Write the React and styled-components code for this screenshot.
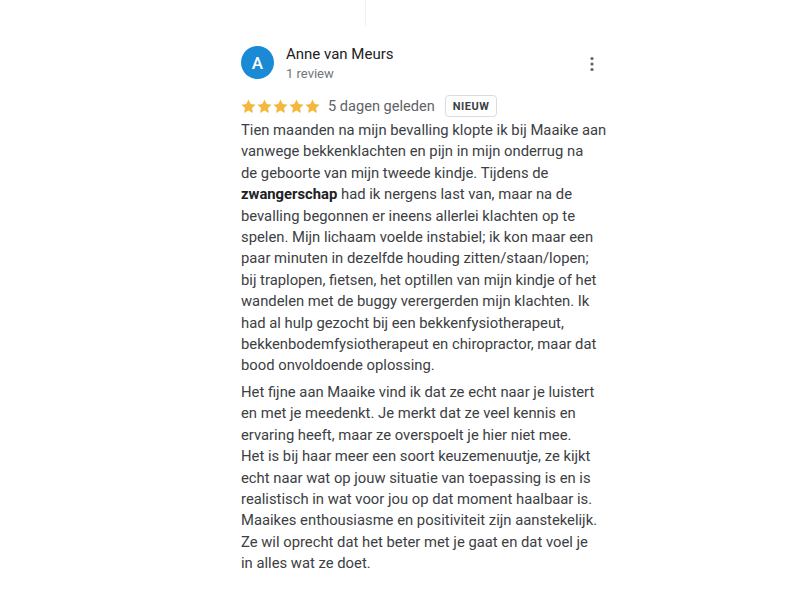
import React from "react";
import styled, { createGlobalStyle } from "styled-components";

const GlobalStyle = createGlobalStyle`
  html, body {
    margin: 0;
    padding: 0;
    background: #ffffff;
  }
  body {
    font-family: Roboto, "Noto Sans", Arial, sans-serif;
    -webkit-font-smoothing: antialiased;
  }
`;

const Page = styled.div`
  position: relative;
  width: 800px;
  height: 600px;
  display: flex;
  justify-content: flex-start;
  padding: 42px 0 0 241px;
  box-sizing: border-box;
`;

const Divider = styled.div`
  position: absolute;
  left: 365px;
  top: 0;
  width: 1px;
  height: 26px;
  background: #f1f1f1;
`;

const Review = styled.div`
  width: 363px;
  display: flex;
  flex-direction: column;
`;

const Header = styled.div`
  display: flex;
  align-items: center;
  gap: 12px;
`;

const Avatar = styled.div`
  width: 33px;
  height: 33px;
  border-radius: 50%;
  background: #1a8ad6;
  color: #fff;
  display: flex;
  align-items: center;
  justify-content: center;
  font-size: 17px;
  font-weight: 500;
`;

const Who = styled.div`
  flex: 1;
  display: flex;
  flex-direction: column;
  gap: 1px;
`;

const Name = styled.div`
  font-size: 15px;
  color: #202124;
  line-height: 20px;
  margin-top: 2px;
`;

const Count = styled.div`
  font-size: 13px;
  color: #70757a;
  line-height: 18px;
`;

const More = styled.div`
  width: 16px;
  display: flex;
  justify-content: center;
  margin-right: 4px;
  margin-top: 2px;
`;

const Meta = styled.div`
  display: flex;
  align-items: center;
  margin-top: 12px;
  height: 22px;
`;

const Stars = styled.div`
  display: flex;
  gap: 1px;
  margin-right: 8px;
`;

const Ago = styled.span`
  font-size: 14.6px;
  color: #5f6368;
  margin-right: 10px;
`;

const Badge = styled.span`
  border: 1px solid #dadce0;
  border-radius: 4px;
  padding: 0 7px;
  height: 20px;
  display: inline-flex;
  align-items: center;
  font-size: 11px;
  font-weight: 700;
  letter-spacing: 0.5px;
  color: #3c4043;
`;

const Body = styled.div`
  margin-top: 3px;
  font-size: 14.8px;
  line-height: 21.4px;
  color: #3c4043;
  white-space: nowrap;

  p {
    margin: 0 0 5px 0;
  }
  b {
    color: #202124;
    font-weight: 700;
  }
`;

const Star = () => (
  <svg width="15" height="15" viewBox="0 0 24 24">
    <path
      fill="#f5b83d"
      d="M12 .8l3.4 7.3 8 .9-5.9 5.5 1.6 7.9L12 18.4l-7.1 4 1.6-7.9L.6 9l8-.9z"
    />
  </svg>
);

const Dots = () => (
  <svg width="4" height="16" viewBox="0 0 4 16">
    <circle cx="2" cy="2.5" r="1.6" fill="#5f6368" />
    <circle cx="2" cy="8" r="1.6" fill="#5f6368" />
    <circle cx="2" cy="13.5" r="1.6" fill="#5f6368" />
  </svg>
);

export default function App() {
  return (
    <>
      <GlobalStyle />
      <Page>
        <Divider />
        <Review>
          <Header>
            <Avatar>A</Avatar>
            <Who>
              <Name>Anne van Meurs</Name>
              <Count>1 review</Count>
            </Who>
            <More>
              <Dots />
            </More>
          </Header>
          <Meta>
            <Stars>
              {[0, 1, 2, 3, 4].map((i) => (
                <Star key={i} />
              ))}
            </Stars>
            <Ago>5 dagen geleden</Ago>
            <Badge>NIEUW</Badge>
          </Meta>
          <Body>
            <p>
              Tien maanden na mijn bevalling klopte ik bij Maaike aan<br />
              vanwege bekkenklachten en pijn in mijn onderrug na<br />
              de geboorte van mijn tweede kindje. Tijdens de<br />
              <b>zwangerschap</b> had ik nergens last van, maar na de<br />
              bevalling begonnen er ineens allerlei klachten op te<br />
              spelen. Mijn lichaam voelde instabiel; ik kon maar een<br />
              paar minuten in dezelfde houding zitten/staan/lopen;<br />
              bij traplopen, fietsen, het optillen van mijn kindje of het<br />
              wandelen met de buggy verergerden mijn klachten. Ik<br />
              had al hulp gezocht bij een bekkenfysiotherapeut,<br />
              bekkenbodemfysiotherapeut en chiropractor, maar dat<br />
              bood onvoldoende oplossing.
            </p>
            <p>
              Het fijne aan Maaike vind ik dat ze echt naar je luistert<br />
              en met je meedenkt. Je merkt dat ze veel kennis en<br />
              ervaring heeft, maar ze overspoelt je hier niet mee.<br />
              Het is bij haar meer een soort keuzemenuutje, ze kijkt<br />
              echt naar wat op jouw situatie van toepassing is en is<br />
              realistisch in wat voor jou op dat moment haalbaar is.<br />
              Maaikes enthousiasme en positiviteit zijn aanstekelijk.<br />
              Ze wil oprecht dat het beter met je gaat en dat voel je<br />
              in alles wat ze doet.
            </p>
          </Body>
        </Review>
      </Page>
    </>
  );
}
